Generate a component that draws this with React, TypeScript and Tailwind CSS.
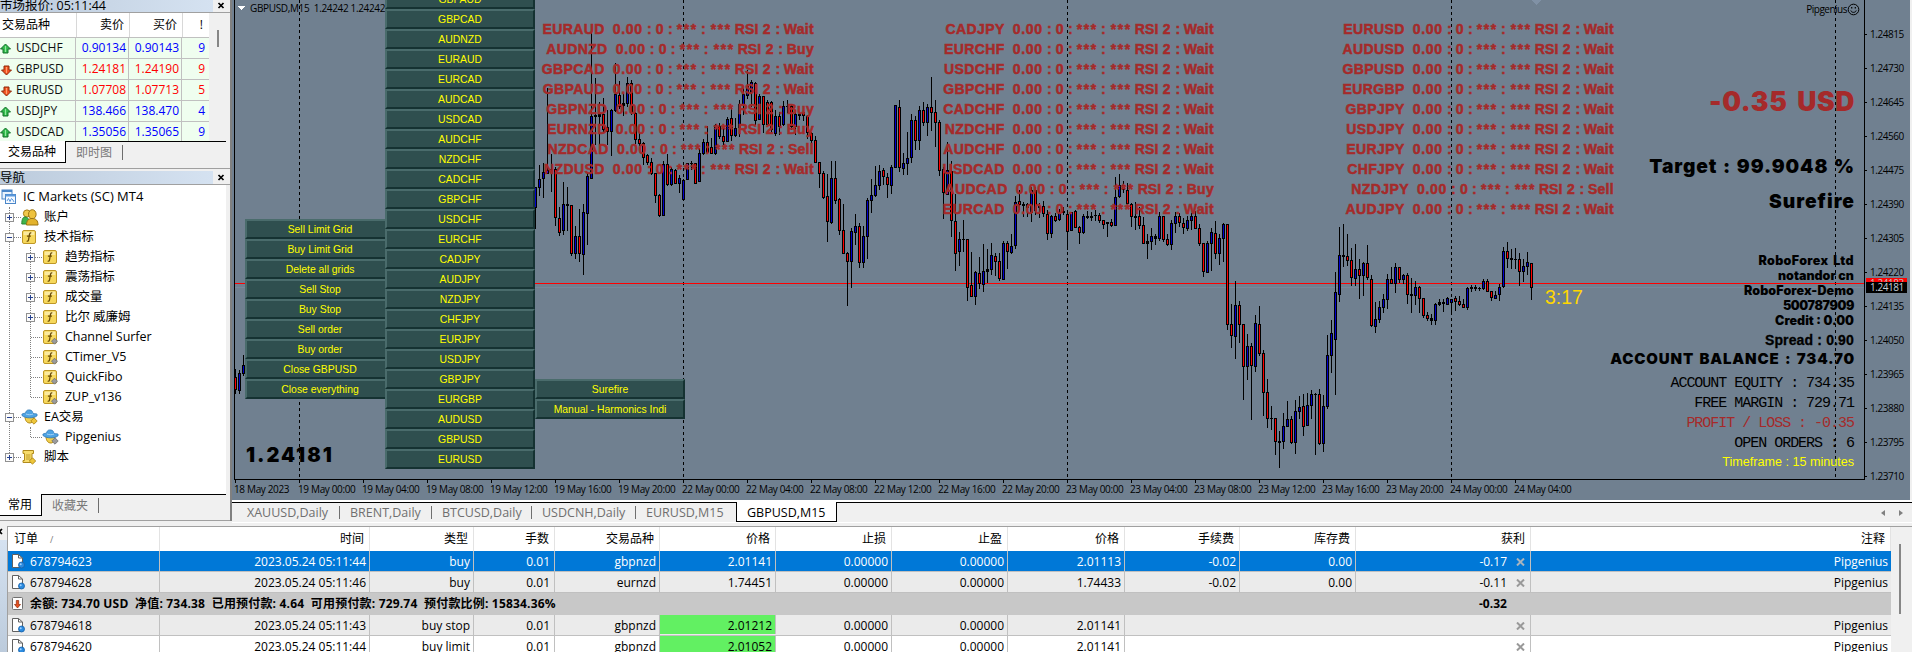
import React from "react";
import clsx from "clsx";

type Candle = [high: number, top: number, bottom: number, low: number, dir: "u" | "d"];

const CANDLE_STEP = 4;

const firstCandles: Candle[] = [
  [369, 377, 390, 394, "d"], [370, 373, 391, 394, "u"], [355, 365, 374, 376, "u"],
];

const candles: Candle[] = [
  [187, 187, 208, 229, "u"], [165, 179, 188, 196, "u"], [163, 172, 179, 198, "u"], [88, 170, 174, 174, "u"], [154, 169, 170, 192, "d"],
  [167, 169, 218, 226, "d"], [207, 218, 233, 236, "d"], [182, 204, 231, 235, "u"], [187, 204, 206, 231, "d"], [205, 205, 254, 256, "d"],
  [226, 236, 254, 259, "u"], [209, 236, 254, 262, "d"], [204, 212, 255, 275, "u"], [173, 176, 214, 245, "u"], [32, 116, 179, 179, "u"],
  [78, 115, 117, 145, "d"], [102, 114, 117, 145, "u"], [98, 114, 130, 132, "d"], [110, 127, 132, 145, "d"], [109, 110, 132, 156, "u"],
  [63, 94, 111, 112, "u"], [81, 95, 107, 109, "d"], [93, 103, 106, 116, "u"], [77, 83, 104, 107, "u"], [80, 83, 113, 115, "d"],
  [112, 113, 140, 144, "d"], [132, 139, 144, 146, "d"], [142, 143, 158, 165, "d"], [154, 155, 163, 165, "d"], [158, 162, 174, 175, "d"],
  [173, 173, 196, 203, "d"], [194, 195, 216, 217, "d"], [161, 164, 216, 216, "u"], [154, 164, 185, 186, "d"], [167, 169, 185, 186, "u"],
  [169, 170, 184, 184, "d"], [175, 178, 184, 193, "u"], [179, 180, 200, 200, "u"], [163, 163, 180, 180, "u"], [161, 163, 164, 170, "d"],
  [163, 163, 184, 184, "d"], [148, 153, 182, 182, "u"], [139, 142, 154, 155, "u"], [126, 142, 153, 153, "d"], [138, 147, 154, 154, "d"],
  [124, 125, 154, 155, "u"], [123, 126, 137, 139, "d"], [128, 136, 142, 145, "d"], [117, 119, 142, 142, "u"], [107, 118, 136, 141, "d"],
  [118, 128, 136, 137, "u"], [100, 104, 128, 137, "u"], [88, 94, 105, 115, "u"], [70, 86, 96, 99, "u"], [80, 82, 93, 107, "u"],
  [82, 83, 121, 125, "d"], [94, 96, 120, 120, "u"], [96, 96, 125, 133, "d"], [100, 102, 125, 125, "d"], [101, 102, 130, 133, "d"],
  [110, 116, 134, 136, "u"], [112, 116, 127, 135, "d"], [101, 106, 125, 126, "u"], [100, 106, 107, 113, "d"], [105, 106, 127, 130, "d"],
  [110, 114, 127, 135, "u"], [112, 114, 116, 120, "u"], [110, 112, 116, 121, "d"], [115, 116, 133, 139, "d"], [132, 133, 141, 144, "d"],
  [136, 140, 163, 163, "d"], [162, 162, 174, 188, "d"], [171, 173, 198, 199, "d"], [174, 196, 222, 242, "d"], [161, 178, 223, 224, "u"],
  [161, 178, 201, 204, "d"], [198, 199, 231, 235, "d"], [204, 230, 254, 254, "d"], [252, 253, 262, 306, "d"], [228, 231, 262, 288, "u"],
  [214, 226, 233, 245, "u"], [223, 226, 263, 268, "d"], [226, 236, 263, 268, "u"], [198, 200, 237, 259, "u"], [179, 195, 201, 213, "u"],
  [166, 185, 196, 197, "u"], [165, 171, 186, 190, "u"], [168, 170, 177, 185, "d"], [173, 177, 185, 198, "d"], [165, 167, 186, 194, "u"],
  [105, 105, 168, 168, "u"], [100, 107, 168, 172, "d"], [153, 163, 169, 175, "u"], [132, 158, 164, 175, "u"], [114, 120, 158, 163, "u"],
  [116, 120, 141, 150, "d"], [106, 110, 141, 150, "u"], [102, 110, 123, 126, "d"], [104, 107, 123, 136, "u"], [77, 107, 113, 131, "d"],
  [100, 112, 123, 147, "d"], [120, 122, 171, 176, "d"], [167, 169, 193, 219, "d"], [142, 170, 195, 195, "u"], [161, 171, 221, 237, "d"],
  [194, 221, 254, 271, "d"], [232, 239, 252, 266, "u"], [220, 239, 240, 252, "d"], [239, 239, 288, 301, "d"], [252, 285, 297, 297, "d"],
  [271, 272, 297, 305, "u"], [257, 273, 284, 289, "d"], [244, 271, 285, 292, "u"], [249, 269, 272, 283, "u"], [243, 255, 270, 275, "u"],
  [253, 256, 262, 276, "d"], [253, 261, 279, 281, "d"], [241, 243, 280, 280, "u"], [241, 243, 252, 269, "d"], [234, 246, 253, 254, "u"],
  [196, 202, 246, 249, "u"], [190, 201, 205, 210, "d"], [202, 204, 206, 217, "d"], [203, 204, 208, 217, "d"], [187, 190, 213, 222, "u"],
  [187, 190, 211, 215, "d"], [203, 206, 208, 218, "d"], [201, 206, 214, 217, "d"], [210, 214, 234, 240, "d"], [215, 216, 234, 238, "u"],
  [213, 216, 221, 222, "d"], [209, 213, 220, 221, "u"], [207, 211, 213, 215, "d"], [213, 214, 232, 250, "d"], [212, 212, 231, 231, "u"],
  [210, 211, 228, 228, "d"], [226, 227, 233, 244, "d"], [214, 216, 233, 234, "u"], [211, 216, 218, 219, "d"], [212, 216, 218, 221, "d"],
  [210, 215, 216, 221, "d"], [213, 215, 221, 223, "d"], [220, 220, 225, 229, "d"], [222, 222, 224, 237, "d"], [219, 222, 226, 227, "d"],
  [177, 197, 226, 226, "u"], [174, 185, 197, 198, "u"], [181, 185, 190, 193, "d"], [183, 190, 204, 205, "d"], [203, 204, 217, 227, "d"],
  [202, 216, 218, 230, "d"], [207, 216, 226, 229, "d"], [217, 225, 244, 244, "d"], [234, 241, 244, 259, "u"], [228, 236, 242, 250, "u"],
  [234, 236, 239, 245, "d"], [212, 216, 239, 241, "u"], [216, 216, 240, 242, "d"], [234, 239, 245, 246, "d"], [220, 223, 245, 250, "u"],
  [212, 216, 224, 233, "u"], [213, 216, 223, 227, "d"], [218, 223, 228, 234, "d"], [216, 220, 229, 231, "u"], [213, 216, 221, 230, "u"],
  [211, 216, 229, 229, "d"], [224, 228, 244, 246, "d"], [243, 243, 272, 277, "d"], [241, 243, 273, 273, "u"], [228, 232, 244, 271, "u"],
  [221, 233, 254, 259, "d"], [234, 238, 254, 265, "u"], [223, 224, 239, 262, "u"], [224, 224, 325, 330, "d"], [304, 324, 336, 348, "d"],
  [281, 305, 337, 359, "u"], [301, 305, 325, 343, "d"], [324, 324, 367, 400, "d"], [334, 346, 367, 380, "u"], [343, 346, 366, 420, "d"],
  [315, 323, 367, 372, "u"], [306, 324, 354, 356, "d"], [350, 353, 393, 416, "d"], [379, 392, 419, 428, "d"], [406, 418, 419, 430, "d"],
  [418, 418, 442, 455, "d"], [431, 441, 443, 468, "d"], [413, 426, 442, 449, "u"], [401, 419, 427, 427, "u"], [416, 419, 443, 444, "d"],
  [400, 411, 443, 454, "u"], [396, 407, 412, 419, "u"], [394, 406, 427, 436, "d"], [393, 405, 426, 426, "u"], [390, 394, 406, 419, "u"],
  [393, 394, 395, 455, "d"], [389, 394, 444, 445, "d"], [395, 406, 444, 452, "u"], [335, 355, 407, 409, "u"], [320, 333, 356, 373, "u"],
  [272, 292, 340, 395, "u"], [227, 255, 295, 302, "u"], [224, 255, 257, 267, "d"], [234, 256, 261, 266, "d"], [248, 260, 278, 286, "d"],
  [244, 269, 279, 286, "u"], [259, 269, 276, 299, "d"], [262, 263, 276, 296, "u"], [245, 263, 278, 280, "d"], [275, 279, 326, 327, "d"],
  [302, 319, 327, 333, "u"], [301, 307, 320, 323, "u"], [294, 299, 308, 313, "u"], [274, 279, 300, 309, "u"], [267, 279, 284, 284, "d"],
  [263, 267, 284, 293, "u"], [267, 267, 280, 283, "d"], [274, 275, 280, 284, "u"], [273, 275, 295, 304, "d"], [278, 294, 296, 313, "d"],
  [281, 287, 296, 305, "u"], [286, 287, 299, 313, "d"], [298, 298, 316, 318, "d"], [312, 315, 319, 321, "d"], [314, 318, 321, 325, "d"],
  [303, 304, 321, 325, "u"], [299, 302, 305, 306, "u"], [299, 302, 304, 312, "d"], [297, 298, 305, 305, "u"], [299, 299, 303, 313, "u"],
  [296, 298, 302, 311, "d"], [296, 301, 305, 306, "d"], [299, 304, 308, 308, "d"], [287, 288, 308, 310, "u"], [285, 287, 289, 292, "d"],
  [285, 287, 289, 291, "d"], [287, 288, 289, 291, "d"], [279, 281, 289, 290, "u"], [279, 281, 292, 292, "d"], [291, 291, 298, 301, "d"],
  [291, 295, 299, 299, "u"], [284, 287, 295, 301, "u"], [247, 251, 287, 288, "u"], [242, 251, 259, 268, "d"], [249, 258, 260, 269, "d"],
  [248, 259, 260, 269, "d"], [253, 259, 272, 286, "d"], [259, 266, 272, 282, "u"], [252, 262, 267, 275, "u"], [263, 263, 288, 300, "d"],
];

const timeLabels = [
  "18 May 2023", "19 May 00:00", "19 May 04:00", "19 May 08:00", "19 May 12:00", "19 May 16:00", "19 May 20:00",
  "22 May 00:00", "22 May 04:00", "22 May 08:00", "22 May 12:00", "22 May 16:00", "22 May 20:00",
  "23 May 00:00", "23 May 04:00", "23 May 08:00", "23 May 12:00", "23 May 16:00", "23 May 20:00",
  "24 May 00:00", "24 May 04:00",
];

const priceLabels = [
  "1.24815", "1.24730", "1.24645", "1.24560", "1.24475", "1.24390", "1.24305",
  "1.24220", "1.24135", "1.24050", "1.23965", "1.23880", "1.23795", "1.23710",
];

const orderButtons = [
  "Sell Limit Grid", "Buy Limit Grid", "Delete all grids", "Sell Stop", "Buy Stop",
  "Sell order", "Buy order", "Close GBPUSD", "Close everything",
];

const pairButtons = [
  "GBPAUD", "GBPCAD", "AUDNZD", "EURAUD", "EURCAD", "AUDCAD", "USDCAD", "AUDCHF",
  "NZDCHF", "CADCHF", "GBPCHF", "USDCHF", "EURCHF", "CADJPY", "AUDJPY", "NZDJPY",
  "CHFJPY", "EURJPY", "USDJPY", "GBPJPY", "EURGBP", "AUDUSD", "GBPUSD", "EURUSD",
];

const signals: [string, string][][] = [
  [["EURAUD", "Wait"], ["AUDNZD", "Buy"], ["GBPCAD", "Wait"], ["GBPAUD", "Wait"], ["GBPNZD", "Buy"], ["EURNZD", "Buy"], ["NZDCAD", "Sell"], ["NZDUSD", "Wait"]],
  [["CADJPY", "Wait"], ["EURCHF", "Wait"], ["USDCHF", "Wait"], ["GBPCHF", "Wait"], ["CADCHF", "Wait"], ["NZDCHF", "Wait"], ["AUDCHF", "Wait"], ["USDCAD", "Wait"], ["AUDCAD", "Buy"], ["EURCAD", "Wait"]],
  [["EURUSD", "Wait"], ["AUDUSD", "Wait"], ["GBPUSD", "Wait"], ["EURGBP", "Wait"], ["GBPJPY", "Wait"], ["USDJPY", "Wait"], ["EURJPY", "Wait"], ["CHFJPY", "Wait"], ["NZDJPY", "Sell"], ["AUDJPY", "Wait"]],
];

const quotes = [
  { symbol: "USDCHF", bid: "0.90134", ask: "0.90143", spread: 9, up: true },
  { symbol: "GBPUSD", bid: "1.24181", ask: "1.24190", spread: 9, up: false },
  { symbol: "EURUSD", bid: "1.07708", ask: "1.07713", spread: 5, up: false },
  { symbol: "USDJPY", bid: "138.466", ask: "138.470", spread: 4, up: true },
  { symbol: "USDCAD", bid: "1.35056", ask: "1.35065", spread: 9, up: true },
];

const Arrow = ({ up }: { up: boolean }) => (
  <svg width="12" height="12" viewBox="0 0 12 12" className={clsx("mt-[2px] shrink-0", !up && "rotate-180")}>
    <path d="M5.5 1 L10.5 6 H8 V10 H3 V6 H0.5 Z" fill={up ? "#2fb84a" : "#f0501e"} stroke={up ? "#14702a" : "#8e2a0a"} strokeWidth="1" strokeLinejoin="round" />
    <path d="M5.5 3 V9" stroke={up ? "#8fe89c" : "#ffa070"} strokeWidth="1.2" />
  </svg>
);

const PanelTitle = ({ children }: { children: React.ReactNode }) => (
  <div className="flex h-[14px] shrink-0 items-center border-b border-[#a0a0a0] bg-[#f0f0f0] text-[12.5px]">
    <div className="flex h-full flex-1 items-center overflow-hidden whitespace-nowrap bg-linear-to-r from-[#bccbdc] to-[#d5e2f1] leading-[13px]">
      {children}
    </div>
    <svg width="17" height="13" viewBox="0 0 17 13">
      <path d="M5.5 4 L10.5 9 M10.5 4 L5.5 9" stroke="#000" strokeWidth="1.7" />
    </svg>
  </div>
);

const PanelTabs = ({ active, other, activeClass }: { active: string; other: string; activeClass: string }) => (
  <div className="flex h-[22px] w-[226px] shrink-0 border-t border-black bg-[#f0f0f0] text-xs">
    <div className={clsx("-mt-px flex items-center border-b border-r border-black bg-white pl-2", activeClass)}>{active}</div>
    <div className="my-[3px] flex items-center border-r border-[#6d6d6d] px-[10px] text-[#787878]">{other}</div>
  </div>
);

const MarketWatch = () => (
  <section className="flex h-[169px] flex-col border-b border-[#a0a0a0] bg-[#f0f0f0]">
    <div className="-mt-px">
      <PanelTitle><span>市场报价: 05:11:44</span></PanelTitle>
    </div>
    <div className="flex h-[128px] shrink-0 overflow-hidden">
      <div className="w-[209px] text-xs">
        <div className="flex h-6 bg-white leading-6">
          <div className="w-[77px] border-r border-[#d8d8d8] pl-[2px]">交易品种</div>
          <div className="w-[53px] border-r border-[#d8d8d8] pr-[5px] text-right">卖价</div>
          <div className="w-[53px] border-r border-[#d8d8d8] pr-[5px] text-right">买价</div>
          <div className="w-[26px] pr-[6px] text-right">!</div>
        </div>
        {quotes.map((q) => (
          <div key={q.symbol} className="flex h-[21px] border-t border-[#c0c0c0] bg-[#effeef] leading-[20px]">
            <div className="flex w-[76px] items-center gap-[4px] border-r border-[#c0c0c0] text-[#101010]">
              <Arrow up={q.up} />
              {q.symbol}
            </div>
            <div className={clsx("flex", q.up ? "text-[#0000ff]" : "text-[#ff0000]")}>
              <div className="w-[53px] border-r border-[#c0c0c0] pr-[2px] text-right">{q.bid}</div>
              <div className="w-[53px] border-r border-[#c0c0c0] pr-[2px] text-right">{q.ask}</div>
              <div className="w-[27px] pr-[4px] text-right">{q.spread}</div>
            </div>
          </div>
        ))}
      </div>
      <div className="flex-1 pl-2 pt-[17px]">
        <div className="h-[17px] w-[2px] bg-[#868686]" />
      </div>
    </div>
    <PanelTabs active="交易品种" other="即时图" activeClass="w-[66px]" />
  </section>
);

const Expander = ({ open }: { open?: boolean }) => (
  <svg width="9" height="9" viewBox="0 0 9 9" className="relative shrink-0" shapeRendering="crispEdges">
    <rect x="0.5" y="0.5" width="8" height="8" fill="#fbfbfb" stroke="#919191" />
    <path d={open ? "M2 4.5 H7" : "M2 4.5 H7 M4.5 2 V7"} stroke="#26418f" />
  </svg>
);

const TreeIcon = ({ kind }: { kind: string }) => {
  if (kind === "terminal") {
    return (
      <svg width="16" height="16" viewBox="0 0 16 16" className="shrink-0">
        <rect x="1" y="1" width="10" height="9" fill="#e8f2fc" stroke="#4a86c8" />
        <path d="M1 2 H11" stroke="#4a86c8" strokeWidth="2" />
        <rect x="4.5" y="5.5" width="10" height="9" fill="#f4f9ff" stroke="#4a86c8" />
        <path d="M4.5 6.5 H14.5" stroke="#5a98dc" strokeWidth="2" />
        <path d="M6 12 L7.5 9.5 L9 12.5 L10.5 9.5 L12 11 L13 13" fill="none" stroke="#5d9ade" />
      </svg>
    );
  }
  if (kind === "accounts") {
    return (
      <svg width="18" height="17" viewBox="0 0 18 17" className="shrink-0">
        <circle cx="6" cy="4.5" r="3.6" fill="#f2c94c" stroke="#a87c12" />
        <path d="M0.8 15 C0.8 10 2 8 4 8 C7 8 8 10 8 15 Z" fill="#3fb54b" stroke="#2b8436" />
        <ellipse cx="11.3" cy="5.3" rx="3.8" ry="4.6" fill="#eec23d" stroke="#9c7410" />
        <path d="M5.5 16 C5.5 11 8 9.5 11 9.5 C15 9.5 17 11.5 17 16 Z" fill="#e3b32d" stroke="#9c7410" />
      </svg>
    );
  }
  if (kind === "ea" || kind === "ea-item") {
    return (
      <svg width="17" height="16" viewBox="0 0 17 16" className="shrink-0">
        <path d="M4 7 C4 12 6 14 9 14 C12 14 13 10 13 7 Z" fill="#f1cf4e" stroke="#b58d1a" />
        <path d="M1 6.5 C0 4 4 4.6 4.6 4 C5.2 1 7 0.8 9 1 C11.5 1.2 11.6 3.6 12 4.4 C14 5 17 4 16 6.8 C13 9.6 4 9.6 1 6.5 Z" fill="#4ea3e3" stroke="#2b76b5" strokeWidth="0.8" />
        <path d="M5 5 C7 6 10 6 12 5" fill="none" stroke="#a6d5f7" />
        <path d="M13 8.8 L16.2 12 L13 15.2 L9.8 12 Z" fill={kind === "ea" ? "#eec63a" : "#9b9b9b"} stroke={kind === "ea" ? "#a67f10" : "#6e6e6e"} strokeWidth="0.8" />
      </svg>
    );
  }
  if (kind === "script") {
    return (
      <svg width="16" height="16" viewBox="0 0 16 16" className="shrink-0">
        <path d="M2 1.5 H12.5 V4.5 H11 V11.5 H12.5 V13.5 H2 V11.5 H3.5 V4.5 H2 Z" fill="#f7dc6c" stroke="#b08a1c" />
        <path d="M5 6 H9.5 M5 8 H9.5 M5 10 H9.5" stroke="#b08a1c" strokeWidth="0.8" />
        <path d="M11.5 8.8 L14.7 12 L11.5 15.2 L8.3 12 Z" fill="#eec63a" stroke="#a67f10" strokeWidth="0.8" />
      </svg>
    );
  }
  return (
    <svg width="16" height="16" viewBox="0 0 16 16" className="shrink-0">
      <rect x="1.5" y="1.5" width="13" height="13" rx="1.5" fill="#f6d85c" stroke="#bf9726" />
      <path d="M2.7 2.7 H13.3 V6 H2.7 Z" fill="#fbeaa0" />
      <path d="M10.3 4 C8.7 3.4 8.5 5 8.3 6.5 L7.5 11 C7.3 12.2 6.5 12.4 5.7 12 M5.9 7.2 H9.9" fill="none" stroke="#6b4d08" strokeWidth="1.3" />
      {kind === "custom" && <path d="M12.5 9.2 L15.5 12.2 L12.5 15.2 L9.5 12.2 Z" fill="#9b9b9b" stroke="#6e6e6e" strokeWidth="0.8" />}
    </svg>
  );
};

const TreeRow = ({ level, kind, label, open }: { level: number; kind: string; label: string; open?: boolean }) => (
  <div className={clsx("relative flex h-5 items-center", level === 1 ? "pl-[5px]" : "pl-[26px]")}>
    <div className="flex w-4 items-center">
      {open === undefined ? <span className="w-[5px]" /> : <Expander open={open} />}
      <span className="flex-1 border-t border-dotted border-[#808080]" />
    </div>
    <div className="flex w-[23px] items-center"><TreeIcon kind={kind} /></div>
    <span>{label}</span>
  </div>
);

const Navigator = () => (
  <section className="flex h-[352px] flex-col border-b border-[#a0a0a0] bg-[#f0f0f0] pt-[2px]">
    <PanelTitle><span>导航</span></PanelTitle>
    <div className="relative h-[309px] w-[226px] shrink-0 bg-white pt-[2px] text-[12.5px] tracking-[-0.05px]">
      <div className="absolute left-[9px] top-[22px] h-[250px] border-l border-dotted border-[#808080]" />
      <div className="absolute left-[30px] top-[62px] h-[150px] border-l border-dotted border-[#808080]" />
      <div className="absolute left-[30px] top-[242px] h-[10px] border-l border-dotted border-[#808080]" />
      <div className="flex h-5 items-center gap-[6px] pl-px text-[13px] tracking-normal"><TreeIcon kind="terminal" />IC Markets (SC) MT4</div>
      <TreeRow level={1} kind="accounts" label="账户" open={false} />
      <TreeRow level={1} kind="indicator" label="技术指标" open />
      <TreeRow level={2} kind="indicator" label="趋势指标" open={false} />
      <TreeRow level={2} kind="indicator" label="震荡指标" open={false} />
      <TreeRow level={2} kind="indicator" label="成交量" open={false} />
      <TreeRow level={2} kind="indicator" label="比尔 威廉姆" open={false} />
      <TreeRow level={2} kind="custom" label="Channel Surfer" />
      <TreeRow level={2} kind="custom" label="CTimer_V5" />
      <TreeRow level={2} kind="custom" label="QuickFibo" />
      <TreeRow level={2} kind="custom" label="ZUP_v136" />
      <TreeRow level={1} kind="ea" label="EA交易" open />
      <TreeRow level={2} kind="ea-item" label="Pipgenius" />
      <TreeRow level={1} kind="script" label="脚本" open={false} />
    </div>
    <PanelTabs active="常用" other="收藏夹" activeClass="w-[42px]" />
  </section>
);

const renderCandles = (list: Candle[], startX: number) =>
  list.map(([high, top, bottom, low, dir], i) => {
    const x = startX + i * CANDLE_STEP;
    return (
      <g key={x}>
        <rect x={x} y={high} width="1" height={low - high} />
        <rect x={x - 1} y={top} width="3" height={Math.max(bottom - top, 1)} />
        {bottom - top > 3 && (
          <rect x={x} y={top + 1} width="1" height={bottom - top - 2} fill={dir === "u" ? "#0000cd" : "#ff0000"} />
        )}
      </g>
    );
  });

const ChartCanvas = () => (
  <svg className="absolute left-0 top-0" width="1678" height="500" viewBox="232 0 1678 500" shapeRendering="crispEdges">
    <path d="M1531 0 H1542 L1536.5 5 Z" fill="#8091a5" />
    {[299, 683, 1067, 1451, 1835].map((x) => (
      <path key={x} d={`M${x + 0.5} 0 V478`} stroke="#000" strokeDasharray="3 3" />
    ))}
    <rect x="235" y="287" width="1629" height="1" fill="#778899" />
    <rect x="235" y="283" width="1629" height="1" fill="#ff0000" />
    {renderCandles(firstCandles, 235)}
    {renderCandles(candles, 535)}
    <path d="M234.5 0 V479.5 H1864.5 V0" fill="none" stroke="#000" />
    {timeLabels.map((label, i) => (
      <rect key={label} x={235 + i * 64} y="480" width="1" height="3" />
    ))}
    {priceLabels.map((label, i) => (
      <rect key={label} x="1865" y={34 + i * 34} width="2" height="1" />
    ))}
    <path d="M238 6 H245 L241.5 10 Z" fill="#fff" />
  </svg>
);

const ChartButton = ({ children }: { children: React.ReactNode }) => (
  <button className="block h-5 w-full whitespace-nowrap border-2 border-b-[#153232] border-l-[#4a6c6c] border-r-[#153232] border-t-[#4a6c6c] bg-[#2f4f4f] pt-px text-center text-[10.4px] leading-[15px] text-[#ffff00]">
    {children}
  </button>
);

const Signal = ({ symbol, action }: { symbol: string; action: string }) => (
  <div className="flex h-5 items-center justify-end whitespace-nowrap leading-5">
    <span className="mr-[8px] tracking-[0.4px]">{symbol}</span>
    <span className="w-[33px] tracking-[0.7px]">0.00</span>
    <span className="w-[7px] text-center">:</span>
    <span className="w-[14px] text-center">0</span>
    <span className="w-[7px] text-center">:</span>
    <span className="w-[26px] pl-[3px] tracking-[1.6px]">***</span>
    <span className="w-[7px] text-center">:</span>
    <span className="w-[28px] pl-[4px] tracking-[1.6px]">***</span>
    <span className="w-[28px]">RSI</span>
    <span className="w-[11px]">2</span>
    <span className="mr-[2px] w-[8px] text-center">:</span>
    <span className="tracking-[0.3px]">{action}</span>
  </div>
);

const signalPlace = ["left-[282px]", "left-[682px]", "left-[1082px]"];

const Chart = () => (
  <div className="relative h-[500px] w-[1678px] overflow-hidden bg-[#708090] font-['Liberation_Sans',sans-serif] text-black">
    <ChartCanvas />

    <div className="absolute left-[18px] top-0 h-4 whitespace-pre font-['Open_Sans',sans-serif] text-[10px] leading-4 tracking-[-0.35px]">
      GBPUSD,M15  1.24242 1.24242
    </div>
    <div className="absolute right-[63px] top-[1px] font-['Open_Sans',sans-serif] text-[10px] leading-4 tracking-[-0.5px]">Pipgenius</div>
    <svg className="absolute right-[50px] top-[3px]" width="13" height="13" viewBox="0 0 13 13" fill="none" stroke="#000">
      <circle cx="6.5" cy="6.5" r="5.3" />
      <path d="M3.8 7.5 C4.5 10 8.5 10 9.2 7.5" />
      <path d="M4.7 4 V5.6 M8.3 4 V5.6" strokeWidth="1.2" />
    </svg>

    {signals.map((list, i) => (
      <div key={i} className={clsx("absolute top-[19px] w-[300px] text-[14px] font-bold tracking-[0.1px] text-[#a52a2a] [-webkit-text-stroke:0.5px_#a52a2a]", signalPlace[i])}>
        {list.map(([symbol, action]) => (
          <Signal key={symbol} symbol={symbol} action={action} />
        ))}
      </div>
    ))}

    <div className="absolute left-[13px] top-[219px] w-[150px]">
      {orderButtons.map((b) => <ChartButton key={b}>{b}</ChartButton>)}
    </div>
    <div className="absolute left-[153px] top-[-11px] w-[150px]">
      {pairButtons.map((b) => <ChartButton key={b}>{b}</ChartButton>)}
    </div>
    <div className="absolute left-[303px] top-[379px] w-[150px]">
      <ChartButton>Surefire</ChartButton>
      <ChartButton>Manual - Harmonics Indi</ChartButton>
    </div>

    <div className="absolute left-[14px] top-[443px] font-['Inter',sans-serif] text-[20px] font-black leading-6 tracking-[2px]">1.24181</div>
    <div className="absolute left-[1313px] top-[285px] text-[19.5px] leading-6 text-[#ffd700]">3:17</div>

    <div className="absolute right-[56px] top-[83px] flex flex-col items-end whitespace-nowrap font-['Inter',sans-serif] font-black">
      <span className="-mr-px h-9 text-[26.5px] leading-9 tracking-[0.6px] text-[#a52a2a] [word-spacing:4px]">-0.35 USD</span>
      <span className="-mr-px mt-[35px] h-6 text-[19.2px] leading-6 tracking-[0.9px] [word-spacing:1px]">Target : 99.9048 %</span>
      <span className="-mr-px mt-[11px] h-6 text-[19.2px] leading-6 tracking-[1px]">Surefire</span>
      <span className="mt-[40px] h-[15px] text-[12.5px] leading-[15px] tracking-[0.35px] [word-spacing:2px]">RoboForex Ltd</span>
      <span className="h-[15px] text-[12.5px] leading-[15px]">notandor cn</span>
      <span className="h-[15px] text-[12.5px] leading-[15px] tracking-[0.1px]">RoboForex-Demo</span>
      <span className="h-[15px] text-[12.5px] leading-[15px] tracking-[-0.4px]">500787909</span>
      <span className="h-[15px] text-[12.5px] leading-[15px]">Credit : 0.00</span>
      <span className="mt-[2px] h-5 font-['Liberation_Sans',sans-serif] text-[14px] font-bold leading-5 tracking-[0.15px] [-webkit-text-stroke:0.3px_black]">Spread : 0.90</span>
      <span className="-mr-px h-[18px] text-[15px] leading-[18px] tracking-[0.85px] [word-spacing:1.5px]">ACCOUNT BALANCE : 734.70</span>
      <div className="mt-[6px] flex flex-col items-end font-['Liberation_Mono',monospace] text-[15px] font-normal leading-5 tracking-[-1.02px]">
        <span>ACCOUNT EQUITY : 734.35</span>
        <span>FREE MARGIN : 729.71</span>
        <span className="text-[#a52a2a]">PROFIT / LOSS : -0.35</span>
        <span>OPEN ORDERS : 6</span>
      </div>
      <span className="-mt-[2px] font-['Liberation_Sans',sans-serif] text-[12.6px] font-normal leading-5 text-[#ffff00]">Timeframe : 15 minutes</span>
    </div>

    <div className="absolute right-0 top-[17px] w-[40px] font-['Open_Sans',sans-serif] text-[10px] tracking-[-0.45px]">
      {priceLabels.map((p) => <div key={p} className="h-[34px] leading-[34px]">{p}</div>)}
    </div>
    <div className="absolute left-[1634px] top-[278px] w-[41px] font-['Open_Sans',sans-serif] text-[10px] tracking-[-0.45px]">
      <div className="h-1 overflow-hidden bg-[#ff0000] pl-1 leading-[11px] text-[#c0c0c0]">1.24183</div>
      <div className="h-[11px] bg-black pl-1 leading-[11px] text-[#c8d0d8]">1.24181</div>
    </div>

    <div className="absolute left-[2px] top-[481px] flex font-['Open_Sans',sans-serif] text-[10px] leading-4 tracking-[-0.35px]">
      {timeLabels.map((t) => <span key={t} className="w-16 shrink-0 whitespace-nowrap">{t}</span>)}
    </div>
  </div>
);

const Tab = ({ children, className }: { children: React.ReactNode; className: string }) => (
  <div className={clsx("flex", className)}>
    <span className="flex-1 whitespace-nowrap pl-[10px]">{children}</span>
    <span className="my-[3px] w-px bg-[#6f6f6f]" />
  </div>
);

const ChartTabs = () => (
  <div className="flex h-[20px] border-t border-black bg-[#f0f0f0] pl-[5px] text-[12.5px] leading-[19px] text-[#6f6f6f]">
    <Tab className="w-[103px]">XAUUSD,Daily</Tab>
    <Tab className="w-[92px]">BRENT,Daily</Tab>
    <Tab className="w-[100px]">BTCUSD,Daily</Tab>
    <Tab className="w-[104px]">USDCNH,Daily</Tab>
    <div className="w-[100px] pl-[10px]">EURUSD,M15</div>
    <div className="-mt-px h-5 w-[101px] border border-t-0 border-black bg-white pl-[10px] pt-px leading-[19px] text-black">GBPUSD,M15</div>
    <div className="ml-auto flex items-center gap-[14px] pr-[9px]">
      <svg width="4" height="6" viewBox="0 0 4 6"><path d="M4 0 V6 L0 3 Z" fill="#808080" /></svg>
      <svg width="4" height="6" viewBox="0 0 4 6"><path d="M0 0 V6 L4 3 Z" fill="#808080" /></svg>
    </div>
  </div>
);

const columns = [
  { title: "订单", width: "w-[152px]" },
  { title: "时间", width: "w-[210px]" },
  { title: "类型", width: "w-[104px]" },
  { title: "手数", width: "w-[81px]" },
  { title: "交易品种", width: "w-[105px]" },
  { title: "价格", width: "w-[116px]" },
  { title: "止损", width: "w-[116px]" },
  { title: "止盈", width: "w-[116px]" },
  { title: "价格", width: "w-[117px]" },
  { title: "手续费", width: "w-[115px]" },
  { title: "库存费", width: "w-[116px]" },
  { title: "获利", width: "w-[175px]" },
  { title: "注释", width: "w-[360px]" },
];

const orders = [
  ["678794623", "2023.05.24 05:11:44", "buy", "0.01", "gbpnzd", "2.01141", "0.00000", "0.00000", "2.01113", "-0.02", "0.00", "-0.17", "Pipgenius"],
  ["678794628", "2023.05.24 05:11:46", "buy", "0.01", "eurnzd", "1.74451", "0.00000", "0.00000", "1.74433", "-0.02", "0.00", "-0.11", "Pipgenius"],
  ["678794618", "2023.05.24 05:11:43", "buy stop", "0.01", "gbpnzd", "2.01212", "0.00000", "0.00000", "2.01141", "", "", "", "Pipgenius"],
  ["678794620", "2023.05.24 05:11:44", "buy limit", "0.01", "gbpnzd", "2.01052", "0.00000", "0.00000", "2.01141", "", "", "", "Pipgenius"],
];

const DocIcon = () => (
  <svg width="15" height="16" viewBox="0 0 15 16" className="shrink-0">
    <path d="M2.5 1.5 H8.5 L12.5 5 V14.5 H2.5 Z" fill="#fff" stroke="#606060" />
    <path d="M8.5 1.5 V5 H12.5" fill="none" stroke="#606060" />
    <circle cx="11.5" cy="12" r="3" fill="#2b8be0" stroke="#1560a8" strokeWidth="0.8" />
    <circle cx="10.7" cy="11.2" r="1" fill="#9fd0ff" />
  </svg>
);

const CloseMark = ({ selected }: { selected?: boolean }) => (
  <svg width="9" height="8" viewBox="0 0 9 8" className="mt-px shrink-0">
    <path d="M1 0.5 L8 7.5 M8 0.5 L1 7.5" stroke={selected ? "#a8b4be" : "#999"} strokeWidth="2" />
  </svg>
);

const OrderRow = ({ cells, className, selected, pending }: { cells: string[]; className: string; selected?: boolean; pending?: boolean }) => (
  <div className={clsx("flex h-[21px] shrink-0 border-b border-[#c0c0c0] leading-[21px]", className)}>
    {cells.map((cell, i) => {
      const line = pending && (i === 9 || i === 10) ? "border-r border-transparent" : i < 12 && "border-r border-[#c0c0c0]";
      if (i === 0) {
        return (
          <div key={i} className={clsx("flex items-center gap-[5px] pl-[2px]", columns[i].width, line)}>
            <DocIcon />
            <span>{cell}</span>
          </div>
        );
      }
      if (i === 11) {
        return (
          <div key={i} className={clsx("flex items-center justify-end gap-[9px] pr-[5px]", columns[i].width, line)}>
            {cell}
            <CloseMark selected={selected} />
          </div>
        );
      }
      return (
        <div key={i} className={clsx("text-right", i === 3 ? "pr-[4px]" : "pr-[3px]", columns[i].width, line, pending && i === 5 && "mb-px bg-[#62f062] text-black")}>
          {cell}
        </div>
      );
    })}
  </div>
);

const Terminal = () => (
  <div className="flex h-[126px] overflow-hidden bg-[#f0f0f0] text-xs text-black">
    <div className="flex w-2 shrink-0 flex-col border-r border-[#a0a0a0]">
      <svg width="7" height="14" viewBox="0 0 7 14"><path d="M-3 3 L2 8 M2 3 L-3 8" stroke="#000" strokeWidth="1.7" /></svg>
      <div className="flex-1 bg-linear-to-b from-[#d5e2f1] to-[#bccbdc]" />
    </div>
    <div className="flex w-[1883px] shrink-0 flex-col border-t border-[#a0a0a0]">
      <div className="flex h-6 shrink-0 bg-white leading-6">
        {columns.map((c, i) => (
          <div key={i} className={clsx("border-r border-[#e3e3e3]", c.width, i === 0 ? "pl-[6px]" : "pr-[5px] text-right")}>
            {c.title}
            {i === 0 && <span className="ml-3 text-[9px] text-[#777]">/</span>}
          </div>
        ))}
      </div>
      <OrderRow cells={orders[0]} className="bg-[#0078d7] text-white" selected />
      <OrderRow cells={orders[1]} className="bg-[#ebebeb]" />
      <div className="flex h-[22px] shrink-0 items-center gap-[5px] bg-[#c8c8c8] pl-[2px] font-bold tracking-[0.18px]">
        <svg width="15" height="16" viewBox="0 0 15 16" className="shrink-0">
          <rect x="2.5" y="1.5" width="10" height="12" rx="1" fill="#fff" stroke="#707070" />
          <path d="M7.5 12 L4.5 8.5 H6.3 V4.5 H8.7 V8.5 H10.5 Z" fill="#e8501e" stroke="#8e2a0a" strokeWidth="0.7" />
        </svg>
        <span className="w-[1444px] whitespace-pre">余额: 734.70 USD  净值: 734.38  已用预付款: 4.64  可用预付款: 729.74  预付款比例: 15834.36%</span>
        <span className="tracking-normal">-0.32</span>
      </div>
      <OrderRow cells={orders[2]} className="bg-[#ebebeb]" pending />
      <OrderRow cells={orders[3]} className="bg-white" pending />
    </div>
    <div className="flex-1 border-t border-[#a0a0a0] pl-2 pt-[17px]">
      <div className="h-[70px] w-[2px] bg-[#868686]" />
    </div>
  </div>
);

export default function App() {
  return (
    <div className="flex h-[652px] w-[1912px] flex-col overflow-hidden bg-[#f0f0f0] font-['Open_Sans','Noto_Sans_CJK_SC',sans-serif] text-black">
      <div className="flex h-[526px] shrink-0">
        <aside className="flex h-[521px] w-[232px] shrink-0 flex-col border-r-2 border-[#808080]">
          <MarketWatch />
          <Navigator />
        </aside>
        <main className="flex flex-1 flex-col">
          <Chart />
          <div className="h-[2px] shrink-0 bg-white" />
          <ChartTabs />
          <div className="h-px bg-white" />
        </main>
      </div>
      <Terminal />
    </div>
  );
}
